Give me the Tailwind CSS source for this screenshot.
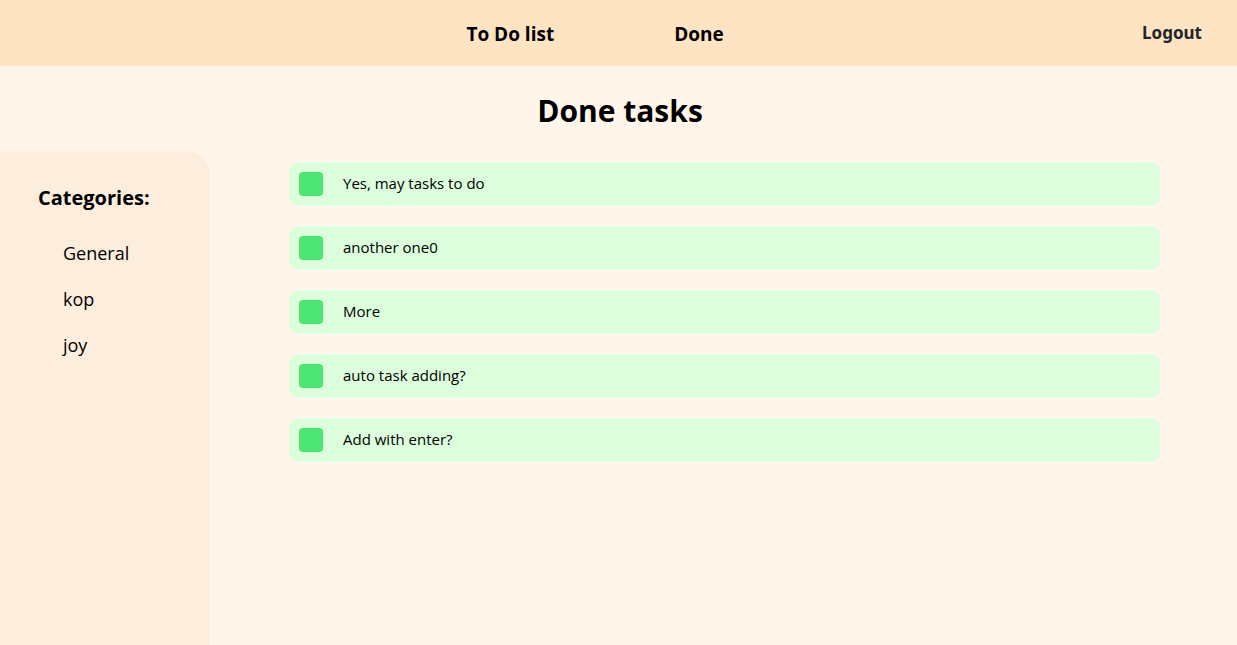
<!DOCTYPE html>
<html lang="en">
<head>
<meta charset="utf-8">
<meta name="viewport" content="width=device-width, initial-scale=1">
<title>Done tasks</title>
<script src="https://cdn.jsdelivr.net/npm/@tailwindcss/browser@4"></script>
</head>
<body class="flex min-h-screen flex-col bg-[#fff5ea] font-['Segoe_UI','Open_Sans','Noto_Sans',sans-serif] text-black">
  <header class="flex h-[66px] items-center bg-[#ffe4c4] pr-[35px]">
    <nav class="flex flex-1 justify-center gap-[120px] pt-0.5 pl-12 text-[19px] font-bold">
      <a href="#todo">To Do list</a>
      <a href="#done">Done</a>
    </nav>
    <button type="button" class="font-['Noto_Sans','Open_Sans',sans-serif] text-[17px] leading-6 font-bold text-[#212529]">Logout</button>
  </header>
  <h1 class="pt-[22px] pb-[18px] pl-[3px] text-center text-[30px] leading-[46px] font-bold">Done tasks</h1>
  <div class="flex flex-1">
    <aside class="w-[209px] shrink-0 rounded-tr-[20px] bg-[#fdeddd] pt-8 pl-[38px]">
      <h2 class="text-[20px] leading-7 font-bold">Categories:</h2>
      <ul class="mt-7 flex flex-col gap-5 pl-[25px] text-[18px] leading-[26px]">
        <li><a href="#general">General</a></li>
        <li><a href="#kop">kop</a></li>
        <li><a href="#joy">joy</a></li>
      </ul>
    </aside>
    <main class="flex-1 pt-[10px] pr-[77px] pl-20">
      <ul class="flex flex-col gap-5 text-[15px] leading-[22px]">
        <li class="flex items-center rounded-[10px] bg-[#dcfedc] p-[10px]"><input id="t1" type="checkbox" checked class="size-6 appearance-none rounded-sm bg-[#4be673]"><label for="t1" class="pb-0.5 pl-5">Yes, may tasks to do</label></li>
        <li class="flex items-center rounded-[10px] bg-[#dcfedc] p-[10px]"><input id="t2" type="checkbox" checked class="size-6 appearance-none rounded-sm bg-[#4be673]"><label for="t2" class="pb-0.5 pl-5">another one0</label></li>
        <li class="flex items-center rounded-[10px] bg-[#dcfedc] p-[10px]"><input id="t3" type="checkbox" checked class="size-6 appearance-none rounded-sm bg-[#4be673]"><label for="t3" class="pb-0.5 pl-5">More</label></li>
        <li class="flex items-center rounded-[10px] bg-[#dcfedc] p-[10px]"><input id="t4" type="checkbox" checked class="size-6 appearance-none rounded-sm bg-[#4be673]"><label for="t4" class="pb-0.5 pl-5">auto task adding?</label></li>
        <li class="flex items-center rounded-[10px] bg-[#dcfedc] p-[10px]"><input id="t5" type="checkbox" checked class="size-6 appearance-none rounded-sm bg-[#4be673]"><label for="t5" class="pb-0.5 pl-5">Add with enter?</label></li>
      </ul>
    </main>
  </div>
</body>
</html>
